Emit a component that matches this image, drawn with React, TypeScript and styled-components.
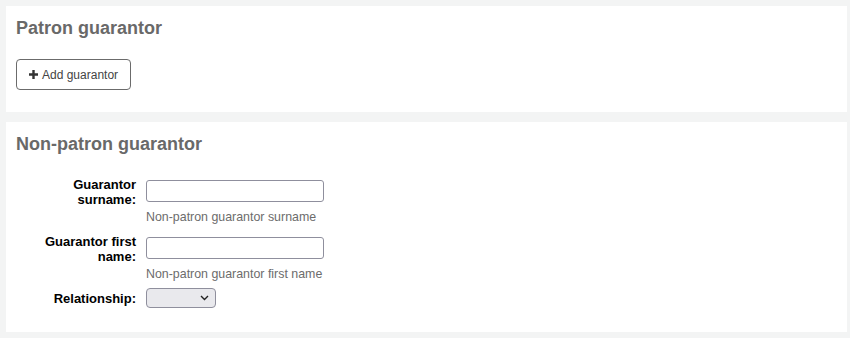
import React from "react";
import styled, { createGlobalStyle } from "styled-components";

const GlobalStyle = createGlobalStyle`
  html, body {
    margin: 0;
    padding: 0;
    background: #f3f4f4;
    font-family: "Liberation Sans", Arial, sans-serif;
  }
`;

const Page = styled.div`
  display: flex;
  flex-direction: column;
  gap: 10px;
  padding: 6px 3px 5px 6px;
`;

const Panel = styled.fieldset`
  margin: 0;
  border: 0;
  background: #fff;
  padding: 12px 10px ${(p) => p.$bottom || 22}px 10px;
  min-width: 0;
`;

const Legend = styled.h3`
  margin: 0;
  font-size: 18px;
  line-height: 21px;
  font-weight: bold;
  color: #696969;
`;

const ActionBar = styled.div`
  margin-top: 20px;
  display: flex;
`;

const Button = styled.button`
  display: inline-flex;
  align-items: center;
  gap: 4px;
  height: 31px;
  padding: 0 12px 0 12px;
  background: #fff;
  border: 1px solid #6b6b6b;
  border-radius: 4px;
  font-family: "Liberation Sans", Arial, sans-serif;
  font-size: 12px;
  color: #444;
  cursor: pointer;
`;

const FormList = styled.ol`
  list-style: none;
  margin: 25px 0 0 0;
  padding: 0;
  display: flex;
  flex-direction: column;
`;

const Row = styled.li`
  display: flex;
  align-items: ${(p) => (p.$center ? "center" : "flex-start")};
  margin-bottom: ${(p) => p.$gap || 0}px;
`;

const Label = styled.label`
  width: 120px;
  margin-right: 10px;
  text-align: right;
  font-size: 13px;
  line-height: 15px;
  font-weight: bold;
  color: #000;
  margin-top: ${(p) => p.$offset || 0}px;
`;

const Field = styled.div`
  display: flex;
  flex-direction: column;
`;

const TextInput = styled.input`
  box-sizing: border-box;
  width: 178px;
  height: 22px;
  border: 1px solid #8f8f9d;
  border-radius: 3px;
  padding: 2px 4px;
  font-size: 13px;
  font-family: "Liberation Sans", Arial, sans-serif;
  background: #fff;
`;

const Hint = styled.div`
  margin-top: 8px;
  font-size: 12.4px;
  line-height: 14px;
  color: #6c6c6c;
`;

const SelectWrap = styled.div`
  position: relative;
  width: 70px;
  height: 20px;
`;

const Select = styled.select`
  appearance: none;
  box-sizing: border-box;
  width: 70px;
  height: 20px;
  border: 1px solid #8f8f9d;
  border-radius: 4px;
  background: #e9e9ed;
  font-size: 12px;
  font-family: "Liberation Sans", Arial, sans-serif;
`;

const Chevron = styled.svg`
  position: absolute;
  right: 7px;
  top: 7px;
  pointer-events: none;
`;

export default function App() {
  return (
    <>
      <GlobalStyle />
      <Page>
        <Panel>
          <Legend>Patron guarantor</Legend>
          <ActionBar>
            <Button type="button">
              <svg width="9" height="9" viewBox="0 0 9 9">
                <path d="M3.3 0h2.4v3.3H9v2.4H5.7V9H3.3V5.7H0V3.3h3.3z" fill="#333" />
              </svg>
              Add guarantor
            </Button>
          </ActionBar>
        </Panel>
        <Panel $bottom={24}>
          <Legend>Non-patron guarantor</Legend>
          <FormList>
            <Row $gap={13}>
              <Label $offset={-3}>Guarantor surname:</Label>
              <Field>
                <TextInput type="text" />
                <Hint>Non-patron guarantor surname</Hint>
              </Field>
            </Row>
            <Row $gap={7}>
              <Label $offset={-3}>Guarantor first name:</Label>
              <Field>
                <TextInput type="text" />
                <Hint>Non-patron guarantor first name</Hint>
              </Field>
            </Row>
            <Row $center>
              <Label>Relationship:</Label>
              <SelectWrap>
                <Select>
                  <option value=""></option>
                </Select>
                <Chevron width="9" height="6" viewBox="0 0 9 6">
                  <path d="M1 1l3.5 3.5L8 1" stroke="#222" strokeWidth="1.4" fill="none" />
                </Chevron>
              </SelectWrap>
            </Row>
          </FormList>
        </Panel>
      </Page>
    </>
  );
}
